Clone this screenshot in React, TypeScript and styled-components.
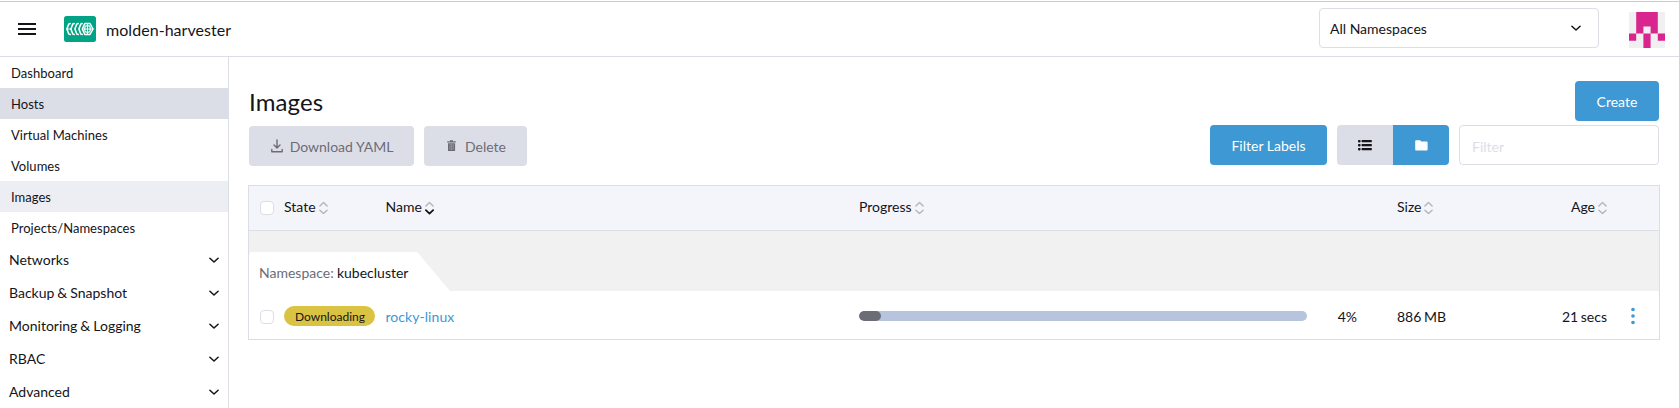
import React from "react";
import styled, { createGlobalStyle } from "styled-components";

const GlobalStyle = createGlobalStyle`
  * { box-sizing: border-box; }
  body {
    margin: 0;
    background: #fff;
    color: #141419;
    font-family: Lato, "Liberation Sans", sans-serif;
    font-size: 14px;
    line-height: 20px;
    overflow: hidden;
  }
  button, input { font: inherit; }
`;

const BORDER = "#dcdee7";
const PRIMARY = "#3d98d3";

const Page = styled.div`
  display: flex;
  flex-direction: column;
  height: 408px;
`;

const WindowEdge = styled.div`
  height: 2px;
  border-bottom: 1px solid #cccccf;
  flex: none;
`;

const Header = styled.header`
  display: flex;
  align-items: flex-start;
  flex: none;
  height: 55px;
  border-bottom: 1px solid ${BORDER};
`;

const MenuButton = styled.button`
  display: flex;
  flex-direction: column;
  gap: 3px;
  width: 18px;
  margin: 21px 28px 0 18px;
  padding: 0;
  border: 0;
  background: none;
`;

const MenuBar = styled.span`
  height: 2px;
  background: #141419;
`;

const Logo = styled.svg`
  width: 32px;
  height: 26px;
  margin: 14px 10px 0 0;
`;

const ClusterName = styled.div`
  flex: 1;
  margin-top: 18px;
  font-size: 16px;
  letter-spacing: 0.05px;
`;

const NamespaceSelect = styled.div`
  display: flex;
  align-items: center;
  justify-content: space-between;
  width: 280px;
  height: 40px;
  margin-top: 6px;
  padding: 1px 17px 0 10px;
  border: 1px solid ${BORDER};
  border-radius: 4px;
`;

const Avatar = styled.svg`
  width: 36px;
  height: 36px;
  margin: 10px 14px 0 30px;
`;

const Body = styled.div`
  display: flex;
  flex: 1;
  min-height: 0;
`;

const Sidebar = styled.nav`
  width: 229px;
  border-right: 1px solid ${BORDER};
  overflow: hidden;
`;

const NavItem = styled.div<{ $bg?: string }>`
  height: 31px;
  padding: 1px 0 0 11px;
  font-size: 13px;
  letter-spacing: 0.03px;
  line-height: 31px;
  background: ${(p) => p.$bg ?? "transparent"};
`;

const NavGroup = styled.div`
  display: flex;
  align-items: center;
  justify-content: space-between;
  height: 33px;
  padding: 1px 9px 0 9px;
  word-spacing: -0.6px;
`;

const Main = styled.main`
  flex: 1;
  padding: 24px 19px 0 19px;
`;

const TitleRow = styled.div`
  display: flex;
  justify-content: space-between;
  height: 44px;
  padding-left: 1px;
  padding-right: 1px;
`;

const Title = styled.h1`
  margin: 6px 0 0;
  font-size: 24px;
  font-weight: 400;
  line-height: 29px;
  letter-spacing: 0.1px;
`;

const Button = styled.button<{ $width: number; $disabled?: boolean }>`
  display: flex;
  align-items: center;
  justify-content: center;
  width: ${(p) => p.$width}px;
  height: 40px;
  padding: 2px 0 0;
  border: 0;
  border-radius: 4px;
  background: ${(p) => (p.$disabled ? BORDER : PRIMARY)};
  color: ${(p) => (p.$disabled ? "#6c6c76" : "#fff")};
  white-space: nowrap;
`;

const Toolbar = styled.div`
  display: flex;
  justify-content: space-between;
  height: 60px;
  padding: 0 1px;
`;

const ToolGroup = styled.div<{ $drop?: boolean }>`
  display: flex;
  gap: 10px;
  height: 40px;
  margin-top: ${(p) => (p.$drop ? 1 : 0)}px;
`;

const ButtonIcon = styled.svg<{ $gap: number }>`
  flex: none;
  margin-left: 1px;
  margin-right: ${(p) => p.$gap}px;
  margin-top: -2px;
`;

const Toggle = styled.div`
  display: flex;
  border-radius: 4px;
  overflow: hidden;
`;

const ToggleOption = styled.div<{ $active?: boolean }>`
  display: flex;
  align-items: center;
  justify-content: center;
  width: 56px;
  background: ${(p) => (p.$active ? PRIMARY : BORDER)};
`;

const FilterInput = styled.input`
  width: 200px;
  height: 40px;
  padding: 2px 12px 0;
  border: 1px solid ${BORDER};
  border-radius: 4px;
  outline: none;
  &::placeholder { color: ${BORDER}; opacity: 1; }
`;

const Table = styled.div`
  width: 1412px;
  border: 1px solid ${BORDER};
`;

const Row = styled.div<{ $head?: boolean }>`
  display: grid;
  grid-template-columns: 35px 101.5px 473.5px 448px 90px 110px 100px 52px;
  align-items: center;
  height: ${(p) => (p.$head ? 45 : 48)}px;
  background: ${(p) => (p.$head ? "#f4f5fa" : "#fff")};
  border-bottom: ${(p) => (p.$head ? `1px solid ${BORDER}` : "0")};
`;

const Cell = styled.div<{ $right?: boolean }>`
  display: flex;
  align-items: center;
  justify-content: ${(p) => (p.$right ? "flex-end" : "flex-start")};
  white-space: nowrap;
`;

const HeadLabel = styled.span`
  margin-right: 3px;
  margin-top: -3px;
`;

const RowText = styled.span`
  margin-top: 3px;
  word-spacing: -1px;
`;

const Percent = styled(RowText)`
  width: 50px;
  text-align: right;
`;

const Checkbox = styled.span<{ $row?: boolean }>`
  width: 14px;
  height: 14px;
  margin-left: 11px;
  margin-top: ${(p) => (p.$row ? 4 : -1)}px;
  border: 1px solid ${BORDER};
  border-radius: 4px;
  background: #fff;
`;

const GroupBand = styled.div`
  display: flex;
  align-items: flex-end;
  height: 60px;
  background: #f1f1f1;
`;

const GroupTab = styled.div`
  width: 201px;
  height: 39px;
  padding: 11px 0 0 10px;
  background: #fff;
  border-top-left-radius: 4px;
  clip-path: polygon(0 0, 167px 0, 169px 1px, 201px 100%, 0 100%);
  white-space: nowrap;
  word-spacing: -0.3px;
`;

const Muted = styled.span`
  color: #6c6c76;
`;

const Badge = styled.span`
  width: 91px;
  height: 20px;
  margin-top: 2px;
  border-radius: 10px;
  background: #dac342;
  font-size: 12px;
  line-height: 22px;
  text-align: center;
  text-indent: 1px;
`;

const Link = styled.a`
  margin-top: 3px;
  letter-spacing: 0.05px;
  color: ${PRIMARY};
`;

const Track = styled.div`
  width: 448px;
  height: 10px;
  margin-top: 2px;
  border-radius: 5px;
  background: #b6c4de;
  overflow: hidden;
`;

const Fill = styled.div`
  height: 10px;
  border-radius: 5px;
  background: #6c6c76;
`;

const Kebab = styled.svg`
  margin-left: 21px;
  margin-top: 2px;
`;

const Chevron = () => (
  <svg width="10" height="7" viewBox="0 0 10 7" fill="none" stroke="#141419" strokeWidth="1.5" strokeLinecap="round" strokeLinejoin="round">
    <path d="M0.9 1.2 L5 5 L9.1 1.2" />
  </svg>
);

const SortIcon = ({ active }: { active?: boolean }) => (
  <svg width="9" height="14" viewBox="0 0 9 14" fill="none" strokeWidth="1.4" strokeLinecap="round" strokeLinejoin="round">
    <path d="M0.9 5 L4.5 1.4 L8.1 5" stroke="#b5b5bb" />
    <path d="M0.9 9.2 L4.5 12.6 L8.1 9.2" stroke={active ? "#141419" : "#b5b5bb"} strokeWidth={active ? 1.8 : 1.4} />
  </svg>
);

const HarvesterLogo = () => (
  <Logo viewBox="0 0 32 26">
    <rect width="32" height="26" rx="2.5" fill="#00a383" />
    <g fill="none" stroke="#fff" strokeWidth="1.6" strokeLinecap="round" strokeLinejoin="round">
      <path d="M6.2 7.5 L4.8 8 L2.9 13 L4.8 18 L6.2 18.5 M10.2 7.5 L8.8 8 L6.9 13 L8.8 18 L10.2 18.5 M14.2 7.5 L12.8 8 L10.9 13 L12.8 18 L14.2 18.5 M18.2 7.5 L16.8 8 L14.9 13 L16.8 18 L18.2 18.5" />
      <path d="M3 13 H7 M18.5 13 H29" strokeWidth="1.2" />
      <path d="M20.8 7.5 H26 L29 13 L26 18.5 H20.8 L18.3 13 Z" strokeWidth="1.5" />
      <rect x="20.8" y="9.8" width="5.4" height="6.4" rx="1.6" strokeWidth="1.2" />
      <path d="M23.5 7.5 V18.5" strokeWidth="1.1" />
    </g>
  </Logo>
);

const navItems = [
  { label: "Dashboard" },
  { label: "Hosts", bg: "#dcdee7" },
  { label: "Virtual Machines" },
  { label: "Volumes" },
  { label: "Images", bg: "#edeef3" },
  { label: "Projects/Namespaces" },
];
const navGroups = ["Networks", "Backup & Snapshot", "Monitoring & Logging", "RBAC", "Advanced"];

export default function App() {
  const progress = 4;
  return (
    <Page>
      <GlobalStyle />
      <WindowEdge />
      <Header>
        <MenuButton aria-label="Menu"><MenuBar /><MenuBar /><MenuBar /></MenuButton>
        <HarvesterLogo />
        <ClusterName>molden-harvester</ClusterName>
        <NamespaceSelect>All Namespaces<Chevron /></NamespaceSelect>
        <Avatar viewBox="0 0 5 5">
          <rect width="5" height="5" fill="#f0f0f0" />
          <path d="M1 0 H4 V3 H3 V2 H2 V3 H1 Z M0 3 H1 V4 H0 Z M4 3 H5 V4 H4 Z M2 3 H3 V5 H2 Z" fill="#d9268e" />
        </Avatar>
      </Header>
      <Body>
        <Sidebar>
          {navItems.map((n) => <NavItem key={n.label} $bg={n.bg}>{n.label}</NavItem>)}
          {navGroups.map((g) => <NavGroup key={g}>{g}<Chevron /></NavGroup>)}
        </Sidebar>
        <Main>
          <TitleRow>
            <Title>Images</Title>
            <Button $width={84}>Create</Button>
          </TitleRow>
          <Toolbar>
            <ToolGroup $drop>
              <Button $width={165} $disabled>
                <ButtonIcon $gap={7} width="12" height="14" viewBox="0 0 12 14" fill="none" stroke="#6c6c76" strokeWidth="1.4" strokeLinecap="round" strokeLinejoin="round">
                  <path d="M6 1 V8.8 M3 6 L6 9 L9 6 M0.8 10.4 V12.8 H11.2 V10.4" />
                </ButtonIcon>
                Download YAML
              </Button>
              <Button $width={103} $disabled>
                <ButtonIcon $gap={8} width="11" height="12" viewBox="1 0 11 12">
                  <path d="M2.2 1.2 H5 V0.3 H8 V1.2 H10.8 V2.5 H2.2 Z M3 3.2 H10.1 V10.4 Q10.1 11 9.5 11 H3.6 Q3 11 3 10.4 Z" fill="#6c6c76" />
                  <path d="M5 4 V10 M6.6 4 V10 M8.2 4 V10" stroke="#aaabb4" strokeWidth="0.6" />
                </ButtonIcon>
                Delete
              </Button>
            </ToolGroup>
            <ToolGroup>
              <Button $width={117}>Filter Labels</Button>
              <Toggle>
                <ToggleOption>
                  <svg width="14" height="11" viewBox="0 0 14 11" fill="#141419">
                    {[0, 4, 8].map((y) => (
                      <g key={y}><rect y={y} width="2.6" height="2.4" rx="0.8" /><rect x="3.6" y={y} width="10.2" height="2.2" rx="0.5" /></g>
                    ))}
                  </svg>
                </ToggleOption>
                <ToggleOption $active>
                  <svg width="13" height="11" viewBox="0 0 13 11" fill="#fff">
                    <path d="M1 0.3 H5 L6.3 1.6 H11.7 Q12.6 1.6 12.6 2.5 V9.6 Q12.6 10.5 11.7 10.5 H1 Q0.2 10.5 0.2 9.6 V1.1 Q0.2 0.3 1 0.3 Z" />
                  </svg>
                </ToggleOption>
              </Toggle>
              <FilterInput placeholder="Filter" />
            </ToolGroup>
          </Toolbar>
          <Table>
            <Row $head>
              <Cell><Checkbox /></Cell>
              <Cell><HeadLabel>State</HeadLabel><SortIcon /></Cell>
              <Cell><HeadLabel>Name</HeadLabel><SortIcon active /></Cell>
              <Cell><HeadLabel>Progress</HeadLabel><SortIcon /></Cell>
              <Cell />
              <Cell><HeadLabel>Size</HeadLabel><SortIcon /></Cell>
              <Cell $right><HeadLabel>Age</HeadLabel><SortIcon /></Cell>
              <Cell />
            </Row>
            <GroupBand>
              <GroupTab><Muted>Namespace:</Muted> kubecluster</GroupTab>
            </GroupBand>
            <Row>
              <Cell><Checkbox $row /></Cell>
              <Cell><Badge>Downloading</Badge></Cell>
              <Cell><Link>rocky-linux</Link></Cell>
              <Cell><Track><Fill style={{ width: `${progress + 1}%` }} /></Track></Cell>
              <Cell><Percent>{progress}%</Percent></Cell>
              <Cell><RowText>886 MB</RowText></Cell>
              <Cell $right><RowText>21 secs</RowText></Cell>
              <Cell>
                <Kebab width="10" height="18" viewBox="0 0 10 18" fill={PRIMARY}>
                  <circle cx="5" cy="2.5" r="1.8" /><circle cx="5" cy="9" r="1.8" /><circle cx="5" cy="15.5" r="1.8" />
                </Kebab>
              </Cell>
            </Row>
          </Table>
        </Main>
      </Body>
    </Page>
  );
}
